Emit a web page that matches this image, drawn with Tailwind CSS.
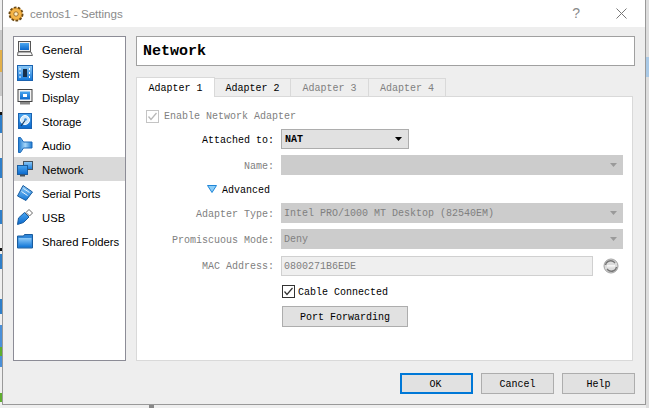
<!DOCTYPE html>
<html lang="en">
<head>
  <meta charset="UTF-8" />
  <title>centos1 - Settings</title>
  <script src="https://cdn.jsdelivr.net/npm/@tailwindcss/browser@4"></script>
</head>
<body class="bg-[#efefef] w-[649px] h-[408px] overflow-hidden relative font-['Liberation_Mono',monospace] text-[10px] text-black">
  <!-- shared gradients for the icons -->
  <svg class="absolute w-0 h-0">
    <defs>
      <linearGradient id="blue" x1="0" y1="0" x2="0" y2="1"><stop offset="0" stop-color="#8fcbf8"/><stop offset="1" stop-color="#1277d8"/></linearGradient>
      <linearGradient id="deep" x1="0" y1="0" x2="0" y2="1"><stop offset="0" stop-color="#4aa6f0"/><stop offset="1" stop-color="#0a68cc"/></linearGradient>
      <linearGradient id="side" x1="0" y1="0" x2="1" y2="0"><stop offset="0" stop-color="#1a78d0"/><stop offset="0.5" stop-color="#a8d8fa"/><stop offset="1" stop-color="#1a78d0"/></linearGradient>
    </defs>
  </svg>

  <!-- what shows behind the dialog -->
  <div class="absolute left-0 top-[30px] w-[3px] h-[66px] bg-[#c9c9c9]"></div>
  <div class="absolute left-0 top-[50px] w-[3px] h-[22px] bg-[#e2b04a]"></div>
  <div class="absolute left-0 top-[112px] w-[3px] h-[3px] bg-[#111111]"></div>
  <div class="absolute left-0 top-[115px] w-[3px] h-[18px] bg-[#2f7fc9]"></div>
  <div class="absolute left-0 top-[158px] w-[3px] h-[20px] bg-[#2f7fc9]"></div>
  <div class="absolute left-0 top-[210px] w-[3px] h-[14px] bg-[#2f7fc9]"></div>
  <div class="absolute left-0 top-[248px] w-[3px] h-[3px] bg-[#111111]"></div>
  <div class="absolute left-0 top-[254px] w-[3px] h-[15px] bg-[#2f7fc9]"></div>
  <div class="absolute left-0 top-[299px] w-[3px] h-[15px] bg-[#2f7fc9]"></div>
  <div class="absolute left-0 top-[325px] w-[3px] h-[42px] bg-[#4a90d9]"></div>
  <div class="absolute left-0 top-[347px] w-[3px] h-[9px] bg-[#5fae2e]"></div>
  <div class="absolute left-0 top-[393px] w-[3px] h-[9px] bg-[#5fae2e]"></div>
  <div class="absolute left-[646px] top-0 w-[3px] h-[408px] bg-[#dddddd]"></div>
  <div class="absolute left-[646px] top-[57px] w-[3px] h-[20px] bg-[#a9c9e6]"></div>
  <div class="absolute left-[149px] top-[405px] w-[5px] h-[3px] bg-[#888888]"></div>

  <!-- dialog -->
  <div class="absolute left-[3px] top-0 w-[642px] h-[404px] bg-[#eeeeee] shadow-[0_0_0_1px_#999999] flex flex-col">
    <!-- title bar -->
    <div class="h-[27px] bg-white flex items-center pl-[5px] shrink-0">
      <svg class="w-[16px] h-[16px]" viewBox="0 0 16 16">
        <circle cx="8" cy="8" r="6.600" fill="#eea93a" stroke="#6b4a16" stroke-width="1.800" stroke-dasharray="2.600 1.500"/>
        <circle cx="8" cy="8" r="5" fill="#f4b64a"/>
        <circle cx="8" cy="8" r="2.200" fill="#fff0c8" stroke="#8a5a1a" stroke-width="0.800"/>
      </svg>
      <span class="ml-[6px] font-['Liberation_Sans',sans-serif] text-[11.6px] text-[#8a8a8a]">centos1 - Settings</span>
      <span class="ml-auto font-['Liberation_Sans',sans-serif] text-[14px] text-[#8a8a8a] mr-[36px]">?</span>
      <svg class="w-[11px] h-[11px] mr-[18px]" viewBox="0 0 11 11"><path d="M0.500 0.500L10.500 10.500M10.500 0.500L0.500 10.500" stroke="#777777" fill="none"/></svg>
    </div>

    <div class="flex pl-[10px] pt-[9px] gap-[10px]">
      <!-- sidebar -->
      <div class="w-[113px] h-[325px] bg-white border border-[#8c8c96] font-['Liberation_Sans',sans-serif] text-[11.3px] shrink-0">
        <div class="h-[24px] flex items-center pl-[3px] gap-[9px] whitespace-nowrap">
          <svg class="w-[16px] h-[16px]" viewBox="0 0 16 16"><rect x="1.500" y="0.500" width="12" height="10" fill="#eeeeee" stroke="#555555"/><rect x="3" y="2" width="9" height="7" fill="url(#deep)"/><path d="M1 11h13l1.500 3.500h-15z" fill="#f4f4f4" stroke="#666666"/></svg>
          <span class="pt-[2px]">General</span>
        </div>
        <div class="h-[24px] flex items-center pl-[3px] gap-[9px] whitespace-nowrap">
          <svg class="w-[16px] h-[16px]" viewBox="0 0 16 16"><rect x="0.500" y="0.500" width="15" height="15" fill="url(#blue)" stroke="#1a62b0"/><rect x="6" y="4" width="4" height="8" fill="#16304a"/><path d="M3 3v2M3 7v2M3 11v2M12.500 3v2M12.500 7v2M12.500 11v2" stroke="#ffffff"/></svg>
          <span class="pt-[2px]">System</span>
        </div>
        <div class="h-[24px] flex items-center pl-[3px] gap-[9px] whitespace-nowrap">
          <svg class="w-[16px] h-[16px]" viewBox="0 0 16 16"><rect x="1" y="0.500" width="14" height="12" fill="#f2f2f2" stroke="#444444"/><rect x="3" y="2.500" width="10" height="8" fill="url(#deep)"/><rect x="6" y="5" width="4" height="3" fill="#ffffff"/><rect x="3" y="13" width="10" height="2.500" fill="#888888"/></svg>
          <span class="pt-[2px]">Display</span>
        </div>
        <div class="h-[24px] flex items-center pl-[3px] gap-[9px] whitespace-nowrap">
          <svg class="w-[16px] h-[16px]" viewBox="0 0 16 16"><rect x="1.500" y="0.500" width="13" height="15" fill="url(#deep)" stroke="#1a62b0"/><circle cx="8" cy="7" r="4.500" fill="#cfe8fb" stroke="#ffffff"/><circle cx="8.500" cy="6.500" r="1.300" fill="#2f8be0"/><path d="M4 13L8 7.500" stroke="#163a60" stroke-width="1.200"/></svg>
          <span class="pt-[2px]">Storage</span>
        </div>
        <div class="h-[24px] flex items-center pl-[3px] gap-[9px] whitespace-nowrap">
          <svg class="w-[16px] h-[16px]" viewBox="0 0 16 16"><path d="M1.500 0.500h2l3 4.500h8.500v6H6.500l-3 4.500h-2z" fill="url(#side)" stroke="#1a68b8"/></svg>
          <span class="pt-[2px]">Audio</span>
        </div>
        <div class="h-[24px] flex items-center pl-[3px] gap-[9px] whitespace-nowrap bg-[#d9d9d9]">
          <svg class="w-[16px] h-[16px]" viewBox="0 0 16 16"><rect x="6.500" y="0.500" width="9" height="8" fill="url(#blue)" stroke="#45525e"/><rect x="0.500" y="4.500" width="10" height="9" fill="url(#deep)" stroke="#1a5c9e"/><rect x="3" y="13.500" width="5" height="2" fill="#45525e"/></svg>
          <span class="pt-[2px]">Network</span>
        </div>
        <div class="h-[24px] flex items-center pl-[3px] gap-[9px] whitespace-nowrap">
          <svg class="w-[16px] h-[16px]" viewBox="0 0 16 16"><path d="M6 0.500L15.500 7L9 15.500L0.500 11z" fill="url(#blue)" stroke="#1a5c9e"/><path d="M6.500 3.500l6 4M4.500 6.500l6 4" stroke="#e6f2fc"/></svg>
          <span class="pt-[2px]">Serial Ports</span>
        </div>
        <div class="h-[24px] flex items-center pl-[3px] gap-[9px] whitespace-nowrap">
          <svg class="w-[16px] h-[16px]" viewBox="0 0 16 16"><path d="M0.500 15.500L1.500 9L7.500 3.500L12 8L6.500 13.500z" fill="url(#deep)" stroke="#1a5c9e"/><path d="M9 3.500L12 0.500L15.500 4L12.500 7z" fill="#ffffff" stroke="#666666"/></svg>
          <span class="pt-[2px]">USB</span>
        </div>
        <div class="h-[24px] flex items-center pl-[3px] gap-[9px] whitespace-nowrap">
          <svg class="w-[16px] h-[16px]" viewBox="0 0 16 16"><path d="M0.500 15V3h6l1 -1.500h8V15z" fill="#2f86d8" stroke="#1a5c9e"/><rect x="1.500" y="5" width="13" height="9" fill="url(#blue)"/></svg>
          <span class="pt-[2px]">Shared Folders</span>
        </div>
      </div>

      <!-- right side -->
      <div class="w-[499px] flex flex-col">
        <div class="h-[30px] bg-white border border-[#a0a0a0] flex items-center pl-[6px] pt-[2px] text-[15px] font-bold">Network</div>

        <!-- tabs -->
        <div class="flex mt-[11px] h-[19px] items-end">
          <div class="w-[79px] h-[20px] bg-white border border-b-0 border-[#d9d9d9] flex items-center justify-center pt-[2px] -mb-px relative z-10">Adapter 1</div>
          <div class="w-[76px] h-[18px] border-t border-r border-[#d9d9d9] flex items-center justify-center pt-[2px]">Adapter 2</div>
          <div class="w-[78px] h-[18px] border-t border-r border-[#d9d9d9] flex items-center justify-center pt-[2px] text-[#808080]">Adapter 3</div>
          <div class="w-[77px] h-[18px] border-t border-r border-[#d9d9d9] flex items-center justify-center pt-[2px] text-[#808080]">Adapter 4</div>
        </div>

        <!-- adapter page -->
        <div class="w-[497px] h-[265px] bg-white border border-[#d9d9d9] pt-[11px] flex flex-col">
          <div class="h-[16px] flex items-center pl-[9px] gap-[5px] text-[#808080]">
            <span class="w-[13px] h-[13px] border border-[#c4c4c4] flex items-center justify-center">
              <svg class="w-[11px] h-[11px]" viewBox="0 0 11 11"><path d="M1.500 5.500L4 8.500L9.500 2" stroke="#b8b8b8" stroke-width="1.300" fill="none"/></svg>
            </span>
            <span>Enable Network Adapter</span>
          </div>
          <div class="flex items-center mt-[5px] h-[20px]">
            <span class="w-[137px] text-right pt-[2px]">Attached to:</span>
            <div class="ml-[7px] w-[128px] h-[20px] bg-[#e1e1e1] border border-[#adadad] flex items-center pl-[3px] pr-[6px] justify-between font-bold">NAT
              <svg class="w-[7px] h-[4px]" viewBox="0 0 7 4"><path d="M0 0h7L3.500 4z" fill="#000000"/></svg>
            </div>
          </div>
          <div class="flex items-center mt-[6px] h-[20px]">
            <span class="w-[137px] text-right pt-[2px] text-[#808080]">Name:</span>
            <div class="ml-[7px] w-[342px] h-[20px] bg-[#cccccc] flex items-center justify-end pr-[6px]">
              <svg class="w-[7px] h-[4px]" viewBox="0 0 7 4"><path d="M0 0h7L3.500 4z" fill="#9a9a9a"/></svg>
            </div>
          </div>
          <div class="flex items-center mt-[6px] h-[16px] pl-[70px] gap-[5px]">
            <svg class="w-[10px] h-[8px]" viewBox="0 0 10 8"><path d="M0.500 0.500h9L5 7.500z" fill="#8ccdf7" stroke="#1f86d8"/></svg>
            <span class="pt-[2px]">Advanced</span>
          </div>
          <div class="flex items-center mt-[6px] h-[20px]">
            <span class="w-[137px] text-right pt-[2px] text-[#808080]">Adapter Type:</span>
            <div class="ml-[7px] w-[342px] h-[20px] bg-[#cccccc] flex items-center justify-between pl-[3px] pr-[6px] text-[#808080]">Intel PRO/1000 MT Desktop (82540EM)
              <svg class="w-[7px] h-[4px]" viewBox="0 0 7 4"><path d="M0 0h7L3.500 4z" fill="#9a9a9a"/></svg>
            </div>
          </div>
          <div class="flex items-center mt-[6px] h-[20px]">
            <span class="w-[137px] text-right pt-[2px] text-[#808080]">Promiscuous Mode:</span>
            <div class="ml-[7px] w-[342px] h-[20px] bg-[#cccccc] flex items-center justify-between pl-[3px] pr-[6px] text-[#808080]">Deny
              <svg class="w-[7px] h-[4px]" viewBox="0 0 7 4"><path d="M0 0h7L3.500 4z" fill="#9a9a9a"/></svg>
            </div>
          </div>
          <div class="flex items-center mt-[7px] h-[20px]">
            <span class="w-[137px] text-right text-[#808080]">MAC Address:</span>
            <div class="ml-[7px] w-[312px] h-[20px] bg-[#efefef] border border-[#d0d0d0] flex items-center pl-[2px] text-[#808080]">0800271B6EDE</div>
            <svg class="ml-[10px] w-[16px] h-[16px]" viewBox="0 0 16 16" fill="none">
              <circle cx="8" cy="8" r="7" fill="#dcdcdc" stroke="#a0a0a0"/>
              <path d="M2.500 7C3 3.500 7 1.800 10.500 3.500L12 5" stroke="#777777" stroke-width="1.500"/>
              <path d="M13.500 9C13 12.500 9 14.200 5.500 12.500L4 11" stroke="#777777" stroke-width="1.500"/>
              <path d="M4 7.500h8M4 8.800h8" stroke="#f6f6f6"/>
            </svg>
          </div>
          <div class="flex items-center mt-[7px] h-[16px] pl-[145px] gap-[3px]">
            <span class="w-[13px] h-[13px] border border-[#333333] flex items-center justify-center">
              <svg class="w-[11px] h-[11px]" viewBox="0 0 11 11"><path d="M1.500 5.500L4 8.500L9.500 2" stroke="#333333" stroke-width="1.200" fill="none"/></svg>
            </span>
            <span class="pt-[2px]">Cable Connected</span>
          </div>
          <div class="mt-[7px] ml-[145px] w-[126px] h-[21px] bg-[#e1e1e1] border border-[#adadad] flex items-center justify-center pt-[2px]">Port Forwarding</div>
        </div>
      </div>
    </div>

    <!-- dialog buttons -->
    <div class="flex justify-end pr-[10px] gap-[8px] mt-[12px]">
      <div class="w-[73px] h-[21px] bg-[#e1e1e1] border-2 border-[#0078d7] flex items-center justify-center pt-[2px] pr-[2px]">OK</div>
      <div class="w-[73px] h-[21px] bg-[#e1e1e1] border border-[#adadad] flex items-center justify-center pt-[2px]">Cancel</div>
      <div class="w-[73px] h-[21px] bg-[#e1e1e1] border border-[#adadad] flex items-center justify-center pt-[2px]">Help</div>
    </div>
  </div>
</body>
</html>
